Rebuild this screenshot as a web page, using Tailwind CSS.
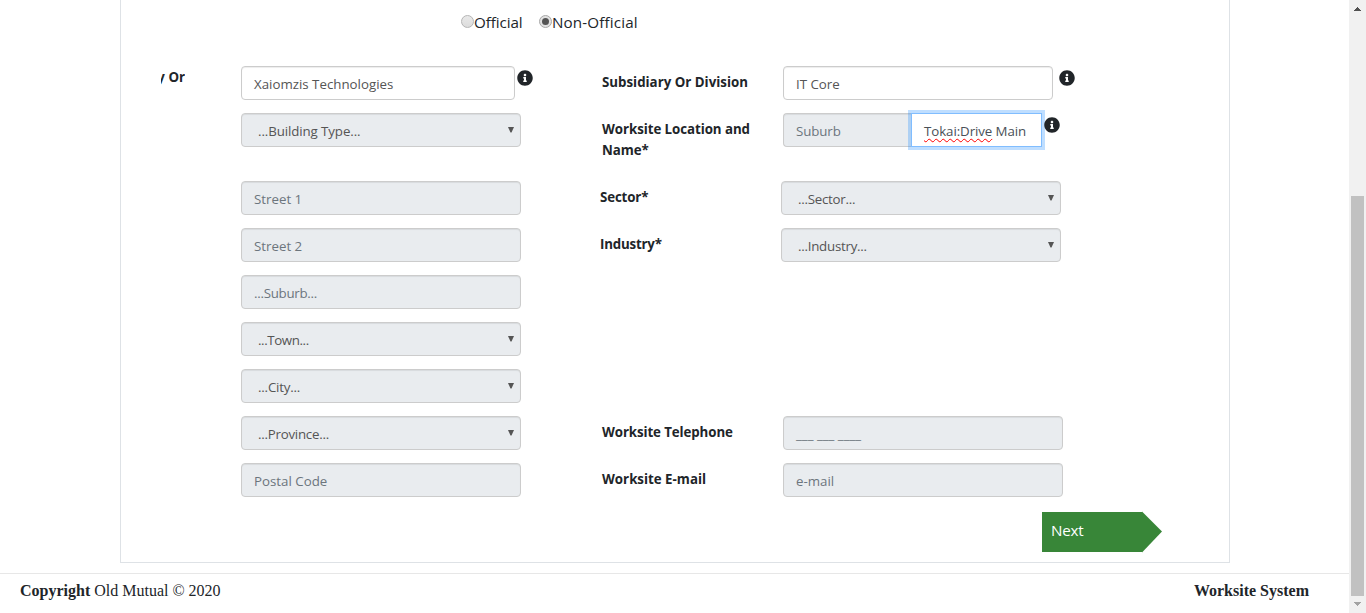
<!DOCTYPE html>
<html lang="en">
<head>
<meta charset="utf-8">
<title>Worksite System</title>
<script src="https://cdn.jsdelivr.net/npm/@tailwindcss/browser@4"></script>
</head>
<body class="flex h-[613px] overflow-hidden bg-white font-['Open_Sans','Noto_Sans',sans-serif] text-[14px] leading-[21px] text-[#212529]">
<svg class="hidden">
  <symbol id="info" viewBox="0 0 512 512"><path d="M256 8C119.043 8 8 119.083 8 256c0 136.997 111.043 248 248 248s248-111.003 248-248C504 119.083 392.957 8 256 8zm0 110c23.196 0 42 18.804 42 42s-18.804 42-42 42-42-18.804-42-42 18.804-42 42-42zm56 254c0 6.627-5.373 12-12 12h-88c-6.627 0-12-5.373-12-12v-24c0-6.627 5.373-12 12-12h12v-64h-12c-6.627 0-12-5.373-12-12v-24c0-6.627 5.373-12 12-12h64c6.627 0 12 5.373 12 12v100h12c6.627 0 12 5.373 12 12v24z"/></symbol>
  <symbol id="caret" viewBox="0 0 6 6"><path d="M0 0H6L3.5 5.5H2.5Z"/></symbol>
</svg>
<div class="flex w-[1349px] shrink-0 flex-col">
  <main class="ml-[120px] flex h-[563px] w-[1110px] shrink-0 flex-col border border-t-0 border-[#dee2e6]">
    <div class="flex h-[66px] shrink-0 pt-3 pl-[340px] text-[15.2px] whitespace-nowrap">
      <div class="flex w-[78px]"><span class="mt-[3px] size-[13px] shrink-0 rounded-full border border-[#b5b5b5] bg-linear-to-b from-[#e9e9e9] to-[#dcdcdc]"></span><span class="tracking-[-0.08px]">Official</span></div>
      <div class="flex"><span class="mt-[3px] flex size-[13px] shrink-0 items-center justify-center rounded-full border border-[#a9a9a9] bg-[#e2e2e2]"><i class="size-[7px] rounded-full bg-[#555]"></i></span><span class="tracking-[0.14px]">Non-Official</span></div>
    </div>

    <section class="flex h-[446px] shrink-0 pl-10 text-[13.3px] whitespace-nowrap text-[#555]">
      <div class="w-20"><div class="flex w-6 justify-end overflow-hidden pt-px font-bold text-[#212529]">y Or</div></div>
      <div class="flex w-[359px] flex-col gap-[13px]">
        <div class="flex gap-[2px]">
          <div class="h-[34px] w-[274px] rounded-[4px] border border-[#ccc] bg-white px-3 pt-[7px] shadow-[inset_0_1px_1px_rgba(0,0,0,0.075)]"><span>Xaiomzis Technologies</span></div>
          <svg class="mt-1 size-4 fill-[#212529]"><use href="#info"/></svg>
        </div>
        <div class="mb-[21px] flex h-[34px] w-[280px] justify-between rounded-[4px] border border-[#ccc] bg-[#e9ecef] pt-[7px] pr-[6px] pl-4 shadow-[inset_0_1px_1px_rgba(0,0,0,0.075)]"><span class="tracking-[-0.1px]">...Building Type...</span><svg class="mt-[6px] size-[6px] fill-[#555]"><use href="#caret"/></svg></div>
        <div class="h-[34px] w-[280px] rounded-[4px] border border-[#ccc] bg-[#e9ecef] px-3 pt-[7px] text-[#6c757d] shadow-[inset_0_1px_1px_rgba(0,0,0,0.075)]"><span>Street 1</span></div>
        <div class="h-[34px] w-[280px] rounded-[4px] border border-[#ccc] bg-[#e9ecef] px-3 pt-[7px] text-[#6c757d] shadow-[inset_0_1px_1px_rgba(0,0,0,0.075)]"><span>Street 2</span></div>
        <div class="h-[34px] w-[280px] rounded-[4px] border border-[#ccc] bg-[#e9ecef] px-3 pt-[7px] text-[#6c757d] shadow-[inset_0_1px_1px_rgba(0,0,0,0.075)]"><span class="tracking-[-0.28px]">...Suburb...</span></div>
        <div class="flex h-[34px] w-[280px] justify-between rounded-[4px] border border-[#ccc] bg-[#e9ecef] pt-[7px] pr-[6px] pl-4 shadow-[inset_0_1px_1px_rgba(0,0,0,0.075)]"><span class="tracking-[-0.4px]">...Town...</span><svg class="mt-[6px] size-[6px] fill-[#555]"><use href="#caret"/></svg></div>
        <div class="flex h-[34px] w-[280px] justify-between rounded-[4px] border border-[#ccc] bg-[#e9ecef] pt-[7px] pr-[6px] pl-4 shadow-[inset_0_1px_1px_rgba(0,0,0,0.075)]"><span class="tracking-[-0.2px]">...City...</span><svg class="mt-[6px] size-[6px] fill-[#555]"><use href="#caret"/></svg></div>
        <div class="flex h-[34px] w-[280px] justify-between rounded-[4px] border border-[#ccc] bg-[#e9ecef] pt-[7px] pr-[6px] pl-4 shadow-[inset_0_1px_1px_rgba(0,0,0,0.075)]"><span class="tracking-[-0.25px]">...Province...</span><svg class="mt-[6px] size-[6px] fill-[#555]"><use href="#caret"/></svg></div>
        <div class="h-[34px] w-[280px] rounded-[4px] border border-[#ccc] bg-[#e9ecef] px-3 pt-[7px] text-[#6c757d] shadow-[inset_0_1px_1px_rgba(0,0,0,0.075)]"><span>Postal Code</span></div>
      </div>

      <div class="flex flex-col">
        <div class="flex h-[47px] pl-[2px]">
          <div class="w-[181px] pt-[6px] font-bold text-[#212529]">Subsidiary Or Division</div>
          <div class="h-[34px] w-[270px] rounded-[4px] border border-[#ccc] bg-white px-3 pt-[7px] shadow-[inset_0_1px_1px_rgba(0,0,0,0.075)]"><span>IT Core</span></div>
          <svg class="mt-1 ml-[5.6px] size-4 fill-[#212529]"><use href="#info"/></svg>
        </div>
        <div class="flex h-[68px] pl-[2px]">
          <div class="w-[181px] pt-[6px] font-bold tracking-[-0.06px] text-[#212529]">Worksite Location and<br>Name*</div>
          <div class="h-[34px] w-[128px] rounded-l-[4px] border border-r-0 border-[#ccc] bg-[#e9ecef] px-3 pt-[7px] text-[#6c757d] shadow-[inset_0_1px_1px_rgba(0,0,0,0.075)]"><span class="tracking-[-0.1px]">Suburb</span></div>
          <div class="h-[34px] w-[130.5px] border border-[#80bdff] bg-white pt-[7px] pl-3 tracking-[-0.08px] text-[#495057] shadow-[0_0_0_3px_rgba(0,123,255,0.25)]"><span class="underline decoration-[#f00] decoration-wavy decoration-[0.7px] underline-offset-[2px] [text-decoration-skip-ink:none]">Tokai:Drive</span> Main</div>
          <svg class="mt-1 ml-[2px] size-4 fill-[#212529]"><use href="#info"/></svg>
        </div>
        <div class="flex h-[47px]">
          <div class="w-[181px] pt-[6px] font-bold tracking-[-0.15px] text-[#212529]">Sector*</div>
          <div class="flex h-[34px] w-[280px] justify-between rounded-[4px] border border-[#ccc] bg-[#e9ecef] pt-[7px] pr-[6px] pl-4 shadow-[inset_0_1px_1px_rgba(0,0,0,0.075)]"><span class="tracking-[-0.25px]">...Sector...</span><svg class="mt-[6px] size-[6px] fill-[#555]"><use href="#caret"/></svg></div>
        </div>
        <div class="flex h-[188px]">
          <div class="w-[181px] pt-[6px] font-bold tracking-[-0.2px] text-[#212529]">Industry*</div>
          <div class="flex h-[34px] w-[280px] justify-between rounded-[4px] border border-[#ccc] bg-[#e9ecef] pt-[7px] pr-[6px] pl-4 shadow-[inset_0_1px_1px_rgba(0,0,0,0.075)]"><span class="tracking-[-0.25px]">...Industry...</span><svg class="mt-[6px] size-[6px] fill-[#555]"><use href="#caret"/></svg></div>
        </div>
        <div class="flex h-[47px] pl-[2px]">
          <div class="w-[181px] pt-[6px] font-bold tracking-[-0.1px] text-[#212529]">Worksite Telephone</div>
          <div class="h-[34px] w-[280px] rounded-[4px] border border-[#ccc] bg-[#e9ecef] px-3 pt-[7px] text-[#6c757d] shadow-[inset_0_1px_1px_rgba(0,0,0,0.075)]"><span>___ ___ ____</span></div>
        </div>
        <div class="flex h-[47px] pl-[2px]">
          <div class="w-[181px] pt-[6px] font-bold text-[#212529]">Worksite E-mail</div>
          <div class="h-[34px] w-[280px] rounded-[4px] border border-[#ccc] bg-[#e9ecef] px-3 pt-[7px] text-[#6c757d] shadow-[inset_0_1px_1px_rgba(0,0,0,0.075)]"><span>e-mail</span></div>
        </div>
      </div>
    </section>

    <div class="ml-[921px] flex h-10 w-[120px] shrink-0 text-[15.2px] text-white">
      <div class="w-[100px] bg-[#388638] pt-[8px] pl-[9px] tracking-[-0.2px]">Next</div>
      <svg class="-my-px h-[42px] w-5 fill-[#388638]" viewBox="0 0 20 42"><path d="M0 0.5L20 20.5L0 41.5Z"/></svg>
    </div>
  </main>
  <footer class="mt-[10px] flex justify-between border-t border-[#e7e7e7] pt-[5px] pr-10 pl-5 font-['Liberation_Serif',serif] text-[16px] leading-6">
    <div><b>Copyright</b> Old Mutual © 2020</div>
    <b>Worksite System</b>
  </footer>
</div>
<div class="flex w-[17px] shrink-0 flex-col items-center bg-[#f1f1f1] pt-[7px]">
  <svg class="h-1 w-[7px] fill-[#505050]" viewBox="0 0 7 4"><path d="M3 0H4V1H5V2H6V3H7V4H0V3H1V2H2V1H3Z"/></svg>
  <div class="mt-[185px] h-[400px] w-[13px] bg-[#c1c1c1]"></div>
  <svg class="mt-[6px] h-1 w-[7px] fill-[#a3a3a3]" viewBox="0 0 7 4"><path d="M0 0H7V1H6V2H5V3H4V4H3V3H2V2H1V1H0Z"/></svg>
</div>
</body>
</html>
